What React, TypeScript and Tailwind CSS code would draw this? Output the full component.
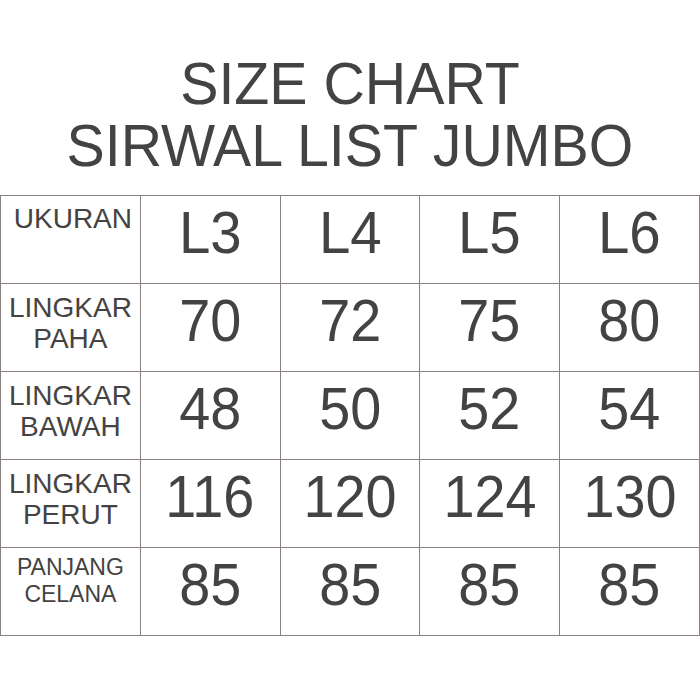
const sizes = ['L3', 'L4', 'L5', 'L6'];

const rows = [
  { label: ['LINGKAR', 'PAHA'], values: ['70', '72', '75', '80'] },
  { label: ['LINGKAR', 'BAWAH'], values: ['48', '50', '52', '54'] },
  { label: ['LINGKAR', 'PERUT'], values: ['116', '120', '124', '130'] },
];

const cell = 'h-[88px] border-r border-b border-[#8a8282]';
const num = cell + ' flex items-center justify-center pb-[14px] text-[60px] leading-none';

export default function App() {
  return (
    <div className="w-[700px] h-[700px] bg-white text-[#444242] font-[family-name:Liberation_Sans,Arial,sans-serif]">
      <div className="pt-[53px] pb-[18px] text-center text-[60px] leading-[62px]">
        <div className="scale-x-[0.955]">SIZE CHART</div>
        <div className="scale-x-[0.955]">SIRWAL LIST JUMBO</div>
      </div>

      <div className="grid grid-cols-5 border-l border-t border-[#8a8282]">
        <div className={cell + ' pt-[7px] pl-[5px] text-center text-[28px] leading-[31px]'}>
          UKURAN
        </div>
        {sizes.map(s => (
          <div key={s} className={num}>
            <span className="scale-x-[0.94]">{s}</span>
          </div>
        ))}

        {rows.map(r => (
          <>
            <div key={r.label.join('-')} className={cell + ' flex flex-col items-center justify-center pb-[9px] text-[28px] leading-[31px]'}>
              <span>{r.label[0]}</span>
              <span>{r.label[1]}</span>
            </div>
            {r.values.map((v, i) => (
              <div key={r.label[1] + i} className={num}>
                <span className="scale-x-[0.93]">{v}</span>
              </div>
            ))}
          </>
        ))}

        <div className={cell + ' flex flex-col items-center justify-center pb-[21px] text-[23px] leading-[27px]'}>
          <span>PANJANG</span>
          <span>CELANA</span>
        </div>
        {['85', '85', '85', '85'].map((v, i) => (
          <div key={'pc' + i} className={num}>
            <span className="scale-x-[0.93]">{v}</span>
          </div>
        ))}
      </div>
    </div>
  );
}
